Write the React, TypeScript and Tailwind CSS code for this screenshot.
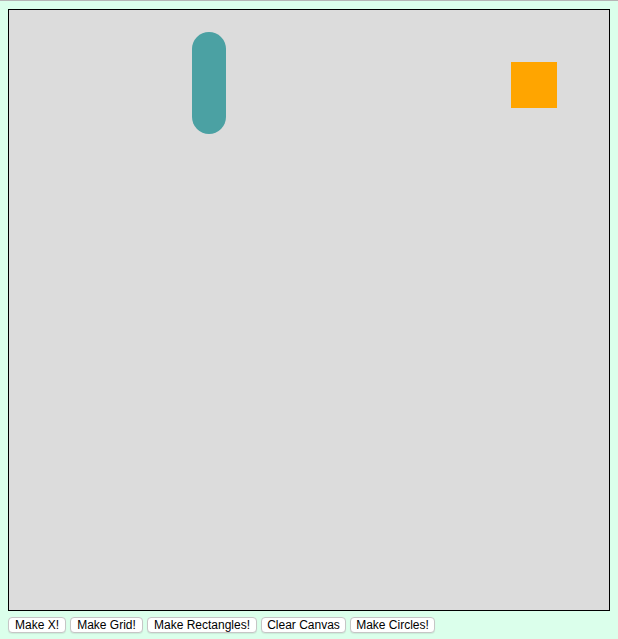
const buttons = [
  { label: 'Make X!', w: 'w-[58px]' },
  { label: 'Make Grid!', w: 'w-[73px]' },
  { label: 'Make Rectangles!', w: 'w-[110px]' },
  { label: 'Clear Canvas', w: 'w-[85px]' },
  { label: 'Make Circles!', w: 'w-[85px]' },
];

export default function App() {
  return (
    <div className="min-h-screen bg-[#dbffeb] border-t border-[#b5b5b5] px-2 pt-2 font-['Liberation_Sans',Arial,sans-serif]">
      <div className="relative w-[602px] h-[602px] border border-black bg-[#dcdcdc]">
        <div className="absolute left-[183px] top-[22px] w-[34px] h-[102px] rounded-full bg-[#4ba1a3]" />
        <div className="absolute left-[502px] top-[52px] w-[46px] h-[46px] bg-[#ffa500]" />
      </div>
      <div className="flex gap-[4px] mt-[6px]">
        {buttons.map((b) => (
          <button
            key={b.label}
            className={`${b.w} h-[16px] flex items-center justify-center rounded-[4px] border border-[#c6c6c6] bg-white text-[12px] leading-none text-black shadow-[0_1px_1px_rgba(0,0,0,0.08)]`}
          >
            {b.label}
          </button>
        ))}
      </div>
    </div>
  );
}
